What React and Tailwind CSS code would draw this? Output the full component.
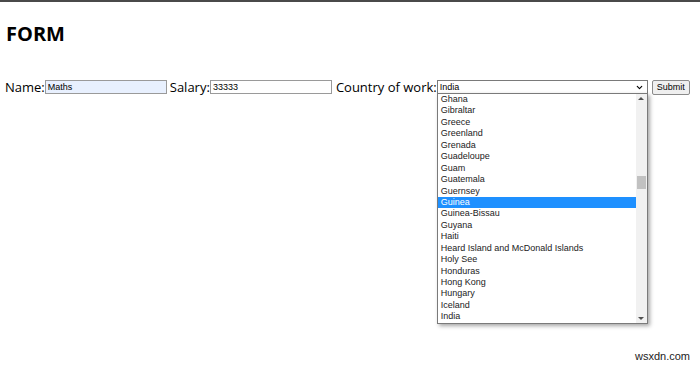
import { ChevronDown } from 'lucide-react'

const countries = [
  'Ghana', 'Gibraltar', 'Greece', 'Greenland', 'Grenada', 'Guadeloupe', 'Guam',
  'Guatemala', 'Guernsey', 'Guinea', 'Guinea-Bissau', 'Guyana', 'Haiti',
  'Heard Island and McDonald Islands', 'Holy See', 'Honduras', 'Hong Kong',
  'Hungary', 'Iceland', 'India',
]

const App = () => {
  return (
    <div className="relative h-[373px] w-[700px] overflow-hidden border-t-2 border-[#4a4a4a] bg-white font-['Open_Sans',sans-serif] text-black">
      <h1 className="px-[6px] pt-[20px] text-[20px] font-bold leading-[24px]">FORM</h1>

      {/* Form row */}
      <div className="mt-[33px] flex items-center whitespace-nowrap pl-[5px] text-[13px] leading-[16px]">
        <span className="shrink-0">Name:</span>
        <div className="flex h-[14px] w-[122px] shrink-0 items-center border border-[#9a9a9a] bg-[#e8f0fe] px-[2px] font-['Liberation_Sans',sans-serif] text-[9px]">
          Maths
        </div>
        <span className="ml-[3px] shrink-0">Salary:</span>
        <div className="flex h-[14px] w-[122px] shrink-0 items-center border border-[#9a9a9a] bg-white px-[2px] font-['Liberation_Sans',sans-serif] text-[9px]">
          33333
        </div>
        <span className="ml-[4px] shrink-0">Country of work:</span>

        <div className="relative shrink-0">
          <div className="flex h-[14px] w-[211px] items-center justify-between border border-[#7a7a7a] bg-white pl-[2px] pr-[3px] font-['Liberation_Sans',sans-serif] text-[9px]">
            <span>India</span>
            <ChevronDown className="h-[9px] w-[9px]" strokeWidth={3} />
          </div>

          {/* Open dropdown list */}
          <div className="absolute left-0 top-[13px] z-10 flex h-[231px] w-[211px] border border-[#7a7a7a] bg-white shadow-[2px_2px_4px_rgba(0,0,0,0.35)]">
            <ul className="flex-1 font-['Liberation_Sans',sans-serif] text-[9px] text-[#222]">
              {countries.map((c) => (
                <li
                  key={c}
                  className={`h-[11.45px] pl-[3px] leading-[11.45px] ${c === 'Guinea' ? 'bg-[#1e90ff] text-white' : ''}`}
                >
                  {c}
                </li>
              ))}
            </ul>
            <div className="flex w-[11px] flex-col items-center justify-between bg-[#f1f1f1] py-[3px]">
              <span className="h-0 w-0 border-x-[3px] border-b-[3px] border-x-transparent border-b-[#505050]" />
              <div className="mb-[128px] mt-[76px] h-[16px] w-[9px] bg-[#c1c1c1]" />
              <span className="h-0 w-0 border-x-[3px] border-t-[3px] border-x-transparent border-t-[#505050]" />
            </div>
          </div>
        </div>

        <button className="ml-[4px] h-[15px] shrink-0 rounded-[2px] border border-[#8a8a8a] bg-[#efefef] px-[4px] font-['Liberation_Sans',sans-serif] text-[9px] leading-[13px]">
          Submit
        </button>
      </div>

      <span className="absolute bottom-[9px] right-[10px] font-['Liberation_Sans',sans-serif] text-[11px] text-[#222]">
        wsxdn.com
      </span>
    </div>
  )
}

export default App
